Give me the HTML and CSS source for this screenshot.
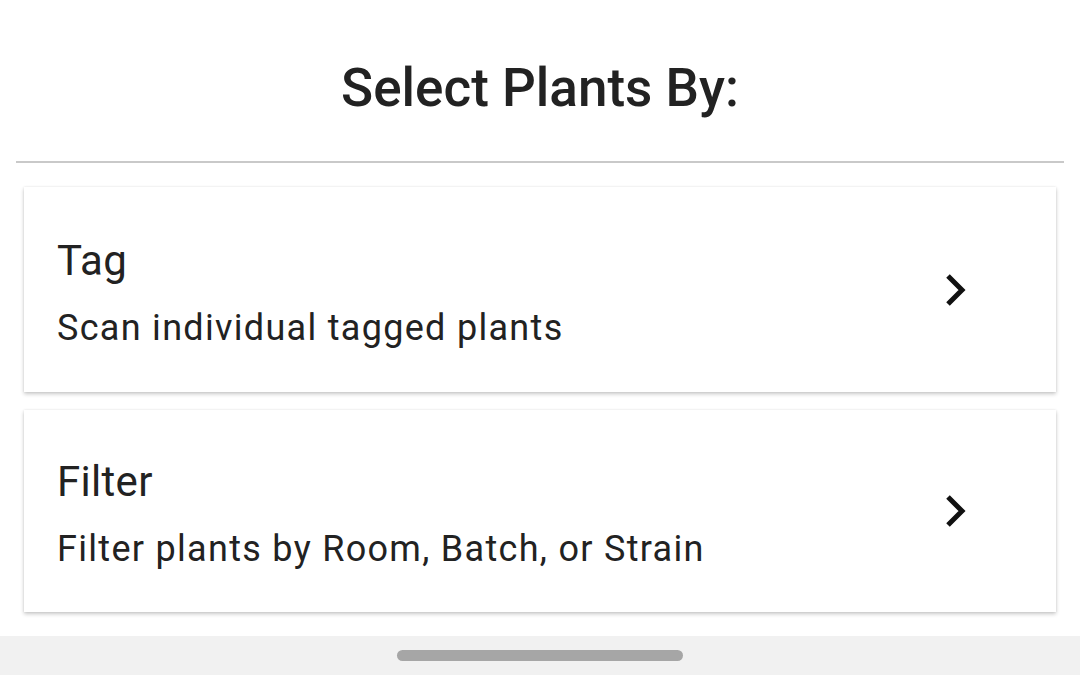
FILE: index.html
```html
<!DOCTYPE html>
<html>
<head>
<meta charset="utf-8">
<link rel="stylesheet" href="styles.css">
</head>
<body>
<div class="screen">
  <header class="header">
    <h1 class="title">Select Plants By:</h1>
  </header>
  <div class="divider"></div>
  <div class="list">
    <div class="card">
      <div class="card-text">
        <div class="card-title">Tag</div>
        <div class="card-sub">Scan individual tagged plants</div>
      </div>
      <svg class="chev" width="24" height="34" viewBox="0 0 24 34"><path d="M4 3 L18 17 L4 31" fill="none" stroke="#111" stroke-width="5"/></svg>
    </div>
    <div class="card">
      <div class="card-text">
        <div class="card-title">Filter</div>
        <div class="card-sub">Filter plants by Room, Batch, or Strain</div>
      </div>
      <svg class="chev" width="24" height="34" viewBox="0 0 24 34"><path d="M4 3 L18 17 L4 31" fill="none" stroke="#111" stroke-width="5"/></svg>
    </div>
  </div>
  <div class="navbar"><div class="handle"></div></div>
</div>
</body>
</html>
```
FILE: styles.css
```css
* { box-sizing: border-box; }
html, body { margin: 0; padding: 0; background: #fff; }
body { font-family: Roboto, "Noto Sans", sans-serif; color: #222; }
.screen { width: 1080px; height: 675px; display: flex; flex-direction: column; overflow: hidden; }
.header { height: 161px; display: flex; align-items: center; justify-content: center; padding-top: 14px; }
.title { margin: 0; font-size: 53px; font-weight: 500; color: #222; }
.divider { height: 2px; background: #c9c9c9; margin: 0 16px; }
.list { flex: 1; display: flex; flex-direction: column; gap: 18px; padding: 24px 24px 0; }
.card { height: 205px; background: #fff; display: flex; align-items: center; justify-content: space-between; padding: 5px 88px 0 33px; box-shadow: 0 2px 4px rgba(0,0,0,0.22), 0 0 2px rgba(0,0,0,0.08); }
.card + .card { height: 202px; }
.card .chev { margin-top: -5px; }
.card-title { font-size: 42px; line-height: 48px; color: #222; letter-spacing: 0.3px; }
.card-sub { font-size: 36px; line-height: 40px; margin-top: 23px; color: #222; letter-spacing: 1.3px; }
.chev { display: block; }
.navbar { height: 39px; background: #f1f1f1; display: flex; justify-content: center; padding-top: 14px; flex-shrink: 0; }
.handle { width: 286px; height: 11px; border-radius: 6px; background: #a6a6a6; }
```
